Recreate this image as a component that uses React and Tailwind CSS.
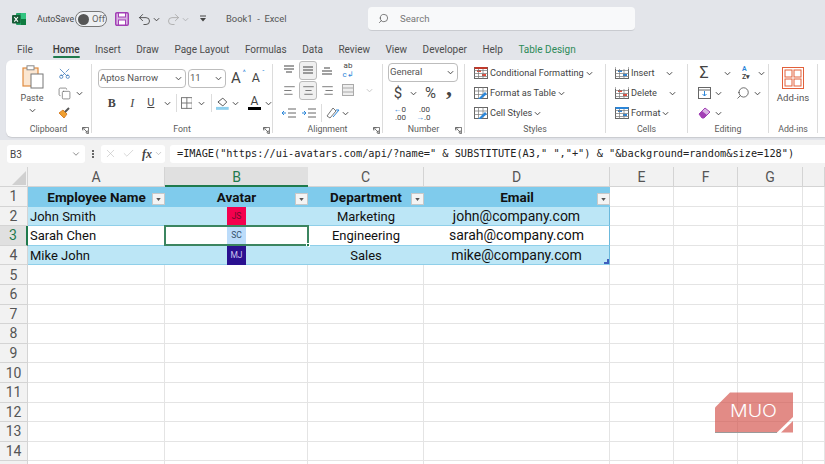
import React from "react";
import { ChevronDown, Search, Undo2, Redo2, X, Check, Scissors, Copy, AlignLeft, AlignCenter, AlignRight } from "lucide-react";

const Chev = ({ className = "" }) => (
  <svg viewBox="0 0 8 5" className={`w-[7px] h-[5px] shrink-0 ${className}`} fill="none" stroke="#444" strokeWidth="1.1"><path d="M1 1l3 3 3-3" /></svg>
);

const Launcher = () => (
  <svg viewBox="0 0 8 8" className="w-[7px] h-[7px] shrink-0" fill="none" stroke="#555" strokeWidth="0.9"><path d="M0.5 3V0.5H7.5V7.5H5" /><path d="M1 1h3M1 1v3M2 2l4 4M6 4v2H4" /></svg>
);

const Lines = ({ rows }) => (
  <svg viewBox="0 0 14 12" className="w-[14px] h-[12px]" fill="none" stroke="#555" strokeWidth="1.1">
    {rows.map((r, i) => <path key={i} d={`M${r[0]} ${r[2]}H${r[1]}`} />)}
  </svg>
);

const Sheet = ({ children }) => (
  <svg viewBox="0 0 14 14" className="w-[14px] h-[14px] shrink-0" fill="none">{children}</svg>
);

const GroupLabel = ({ children, launcher }) => (
  <div className="h-[14px] mt-auto shrink-0 relative flex items-center justify-center text-[8.8px] text-[#5c5c5c]">
    <span>{children}</span>
    {launcher && <span className="absolute right-[2px] top-[4px]"><Launcher /></span>}
  </div>
);

const Select = ({ className, children }) => (
  <div className={`h-[19px] rounded-[4px] border border-[#bdbdbd] bg-white flex items-center justify-between pl-[1px] pr-[3px] text-[#555] ${className}`}>
    {children}<Chev />
  </div>
);

const ListRow = ({ icon, label }) => (
  <div className="h-[20px] shrink-0 flex items-center">
    {icon}
    <span className="ml-[2px] text-[9.2px] text-[#444] whitespace-nowrap">{label}</span>
    <Chev className="ml-[2px]" />
  </div>
);

const Table3 = ({ c1 = "#c0392b", fill = "#e74c3c" }) => (
  <Sheet>
    <rect x="0.5" y="1.5" width="13" height="11" fill="#fff" stroke="#666" />
    <rect x="3" y="4" width="4" height="2" fill={fill} /><rect x="8" y="8" width="4" height="2" fill={fill} />
    <path d="M0 4.500h14M0 7.500h14M0 10.500h14M4.500 1v12M9 1v12" stroke="#777" strokeWidth="0.7" />
    <rect x="0.5" y="1" width="13" height="2" fill={c1} />
  </Sheet>
);

const TableBrush = () => (
  <Sheet>
    <rect x="0.5" y="1.500" width="13" height="11" fill="#fff" stroke="#666" />
    <path d="M0 5h14M0 8.500h14M4.500 1v12M9 1v12" stroke="#777" strokeWidth="0.7" />
    <path d="M5 12l6-6 2 2-6 5H4z" fill="#2b86d9" />
  </Sheet>
);

function TitleBar() {
  return (
    <div className="h-[38px] flex items-center relative shrink-0">
      <svg viewBox="0 0 14 14" className="w-[14px] h-[14px] ml-[12px]">
        <rect x="4" y="1" width="10" height="12" rx="1" fill="#21a366" />
        <rect x="9" y="1" width="5" height="6" fill="#33c481" /><rect x="9" y="7" width="5" height="6" fill="#107c41" />
        <rect x="0" y="3" width="8.500" height="8.500" rx="1" fill="#185c37" />
        <path d="M2.300 5l3.600 4.600M5.900 5L2.300 9.600" stroke="#fff" strokeWidth="1.1" />
      </svg>
      <span className="ml-[11px] pt-[1px] text-[8.8px] text-[#4a4a4a] w-[38px]">AutoSave</span>
      <div className="w-[32px] h-[16px] rounded-full border border-[#777] bg-[#eef0f3] flex items-center pl-[2px]">
        <span className="w-[11px] h-[11px] rounded-full bg-[#555]" />
        <span className="ml-[3px] text-[9.5px] text-[#666]">Off</span>
      </div>
      <svg viewBox="0 0 14 14" className="w-[14px] h-[14px] ml-[8px]" fill="none">
        <rect x="0.7" y="0.7" width="12.600" height="12.600" rx="1.200" stroke="#a23fb5" strokeWidth="1.400" fill="#d9b3e3" />
        <rect x="3.500" y="1" width="7" height="4" fill="#fff" stroke="#a23fb5" />
        <rect x="3.500" y="8" width="7" height="5" fill="#fff" stroke="#a23fb5" />
      </svg>
      <Undo2 className="w-[15px] h-[15px] ml-[8px] text-[#444]" strokeWidth={1.4} />
      <Chev className="ml-[1px]" />
      <Redo2 className="w-[15px] h-[15px] ml-[6px] text-[#a9a9a9]" strokeWidth={1.4} />
      <Chev className="ml-[1px] opacity-30" />
      <svg viewBox="0 0 8 8" className="w-[8px] h-[8px] ml-[10px]"><path d="M1 1h6" stroke="#444" /><path d="M1 3h6L4 6.500z" fill="#444" /></svg>
      <span className="ml-[19px] pt-[1px] text-[9.4px] text-[#555] whitespace-nowrap">Book1&nbsp; -&nbsp; Excel</span>
      <div className="absolute left-[368px] top-[7px] w-[267px] h-[24px] bg-[#f8f9fa] rounded-[4px] border-b border-[#c9cbd0] flex items-center pl-[10px]">
        <Search className="w-[11px] h-[11px] text-[#555] -scale-x-100" strokeWidth={1.6} />
        <span className="ml-[11px] pt-[1px] text-[9.6px] text-[#777]">Search</span>
      </div>
    </div>
  );
}

function Tabs() {
  const tabs = ["Insert", "Draw", "Page Layout", "Formulas", "Data", "Review", "View", "Developer", "Help"];
  return (
    <div className="h-[22px] flex items-center pt-[1px] pl-[17px] gap-x-[15.5px] text-[10px] text-[#4d4d4d] shrink-0 whitespace-nowrap">
      <span>File</span>
      <span className="relative ml-[4.5px] font-medium text-[#3a3a3a]">Home
        <span className="absolute left-0 right-0 top-[14px] h-[2px] bg-[#1f7a4d] rounded" />
      </span>
      {tabs.map((t) => <span key={t}>{t}</span>)}
      <span className="text-[#2d8a58]">Table Design</span>
    </div>
  );
}

function Ribbon() {
  const Divider = () => <div className="w-px self-stretch my-[4px] bg-[#dcdcdc] shrink-0" />;
  return (
    <div className="h-[77px] ml-[6px] bg-white rounded-tl-[6px] rounded-bl-[6px] flex shrink-0 shadow-[0_1px_1px_#c8cacf]">
      {/* Clipboard */}
      <div className="w-[85px] flex flex-col shrink-0">
        <div className="flex pt-[5px]">
          <div className="w-[52px] flex flex-col items-center">
            <svg viewBox="0 0 22 24" className="w-[22px] h-[24px] ml-[1px]" fill="none">
              <rect x="1" y="3" width="15" height="18" fill="#fbe6d1" stroke="#e08b3f" strokeWidth="1.200" />
              <rect x="5" y="0.8" width="7" height="4" fill="#fff" stroke="#8a8a8a" />
              <rect x="9" y="9" width="12" height="14" fill="#fff" stroke="#777" />
            </svg>
            <span className="text-[9px] text-[#555] mt-[2px] leading-[14px]">Paste</span>
            <Chev className="mt-[3px]" />
          </div>
          <div className="flex flex-col">
            <Scissors className="w-[13px] h-[13px] mt-[2px] text-[#2f6fb5] -rotate-90" strokeWidth={1.3} />
            <div className="flex items-center mt-[7px]">
              <Copy className="w-[13px] h-[13px] text-[#666]" strokeWidth={1.3} />
              <Chev className="ml-[5px]" />
            </div>
            <svg viewBox="0 0 13 13" className="w-[13px] h-[13px] mt-[6px]" fill="none">
              <path d="M1 7l5 5 3-4-4-4z" fill="#f0a030" stroke="#d9822b" /><path d="M7 6l4-4" stroke="#555" strokeWidth="2" />
            </svg>
          </div>
        </div>
        <GroupLabel launcher>Clipboard</GroupLabel>
      </div>
      <Divider />
      {/* Font */}
      <div className="w-[180px] flex flex-col shrink-0">
        <div className="flex items-center pt-[9px] pl-[6px]">
          <Select className="w-[88px] text-[9.5px]">Aptos Narrow</Select>
          <Select className="w-[38px] ml-[2px] text-[9.5px]">11</Select>
          <span className="ml-[5px] text-[15px] leading-none text-[#444] relative">A<span className="absolute -right-[5px] -top-[1px] text-[7px] text-[#2b86d9]">^</span></span>
          <span className="ml-[11px] text-[12.5px] leading-none text-[#444] relative">A<span className="absolute -right-[5px] -top-[1px] text-[7px] text-[#2b86d9]">ˇ</span></span>
        </div>
        <div className="flex items-center pt-[5px] pl-[11px] h-[25px]">
          <span className="w-[18px] text-center text-[12px] font-bold text-[#444]" style={{ fontFamily: "'Liberation Serif', serif" }}>B</span>
          <span className="w-[20px] ml-[2px] text-center text-[12px] italic text-[#444]" style={{ fontFamily: "'Liberation Serif', serif" }}>I</span>
          <span className="w-[18px] text-center text-[11px] underline text-[#444]">U</span>
          <Chev className="ml-[4px]" />
          <span className="w-px h-[18px] bg-[#dcdcdc] ml-[5px]" />
          <svg viewBox="0 0 12 12" className="w-[12px] h-[12px] ml-[4px]" fill="none" stroke="#777"><rect x="0.5" y="0.5" width="11" height="11" /><path d="M6 0v12M0 6h12" /></svg>
          <Chev className="ml-[6px]" />
          <span className="w-px h-[18px] bg-[#dcdcdc] ml-[6px]" />
          <svg viewBox="0 0 13 14" className="w-[13px] h-[14px] ml-[4px]" fill="none"><path d="M2 6l5-4 4 4-4 4z" stroke="#555" /><rect x="0" y="11" width="13" height="3" fill="#8fd0ee" /></svg>
          <Chev className="ml-[3px]" />
          <div className="ml-[9px] flex flex-col items-center w-[13px]">
            <span className="text-[12px] leading-[10px] text-[#444]">A</span>
            <span className="w-[13px] h-[3px] bg-black mt-[1px]" />
          </div>
          <Chev className="ml-[4px]" />
        </div>
        <GroupLabel launcher>Font</GroupLabel>
      </div>
      <Divider />
      {/* Alignment */}
      <div className="w-[109px] flex flex-col shrink-0">
        <div className="flex items-center pl-[7px] h-[20px] shrink-0">
          <span className="w-[18px] flex justify-center"><Lines rows={[[2, 12, 2], [2, 12, 5], [4, 10, 8]]} /></span>
          <span className="w-[18px] ml-[1px] h-[19px] flex items-center justify-center rounded-[3px] border border-[#bbb] bg-[#f0f0f0]"><Lines rows={[[2, 12, 3], [2, 12, 6], [2, 12, 9]]} /></span>
          <span className="w-[18px] ml-[1px] flex justify-center"><Lines rows={[[4, 10, 4], [2, 12, 7], [2, 12, 10]]} /></span>
          <span className="w-[16px] ml-[4px] text-[8px] leading-[9px] text-[#444] text-center">ab<br /><span className="text-[#2b86d9]">c↲</span></span>
        </div>
        <div className="flex items-center pl-[7px] h-[20px] shrink-0">
          <span className="w-[18px] flex justify-center"><AlignLeft className="w-[13px] h-[13px] text-[#555]" strokeWidth={1.4} /></span>
          <span className="w-[18px] ml-[1px] h-[19px] flex items-center justify-center rounded-[3px] border border-[#bbb] bg-[#f0f0f0]"><AlignCenter className="w-[13px] h-[13px] text-[#555]" strokeWidth={1.4} /></span>
          <span className="w-[18px] ml-[1px] flex justify-center"><AlignRight className="w-[13px] h-[13px] text-[#555]" strokeWidth={1.4} /></span>
          <svg viewBox="0 0 12 12" className="w-[12px] h-[12px] ml-[6px]" fill="#eee" stroke="#aaa"><rect x="0.5" y="0.5" width="11" height="11" /><path d="M0 4h12M0 8h12" /></svg>
          <Chev className="ml-[12px] opacity-30" />
        </div>
        <div className="flex items-center pl-[9px] h-[20px] mt-[3px] shrink-0">
          <svg viewBox="0 0 14 12" className="w-[14px] h-[12px]" fill="none" stroke="#666"><path d="M6 2h8M6 6h8M6 10h8" /><path d="M4 6H0M2 4L0 6l2 2" stroke="#2b86d9" /></svg>
          <svg viewBox="0 0 14 12" className="w-[14px] h-[12px] ml-[6px]" fill="none" stroke="#666"><path d="M6 2h8M6 6h8M6 10h8" /><path d="M0 6h4M2 4l2 2-2 2" stroke="#2b86d9" /></svg>
          <span className="w-px h-[18px] bg-[#dcdcdc] ml-[5px]" />
          <svg viewBox="0 0 14 14" className="w-[14px] h-[14px] ml-[4px]" fill="none"><path d="M1 10L7 2l3 3-6 7z" stroke="#777" /><path d="M7 11l6-7M13 4h-3" stroke="#2b86d9" /></svg>
          <Chev className="ml-[2px]" />
        </div>
        <GroupLabel launcher>Alignment</GroupLabel>
      </div>
      <Divider />
      {/* Number */}
      <div className="w-[81px] flex flex-col shrink-0">
        <div className="pt-[3px] pl-[5px]"><Select className="w-[70px] text-[9.5px]">General</Select></div>
        <div className="h-[22px] shrink-0 flex items-center pl-[10px]">
          <span className="w-[10px] text-[15px] text-[#444] leading-none text-center">$</span>
          <Chev className="ml-[7px]" />
          <span className="ml-[8px] text-[15px] text-[#444] leading-none">%</span>
          <span className="ml-[10px] h-[12px] text-[24px] font-bold text-[#444] leading-[0px]" style={{ fontFamily: "'Liberation Serif', serif" }}>,</span>
        </div>
        <div className="h-[19px] shrink-0 flex items-center pl-[10px]">
          <div className="w-[13px] text-[8px] leading-[8px] text-[#444] text-right"><span className="text-[#2b86d9]">←</span>0<br />.00</div>
          <div className="w-[14px] ml-[10px] text-[8px] leading-[8px] text-[#444] text-right">.00<br /><span className="text-[#2b86d9]">→</span>.0</div>
        </div>
        <GroupLabel launcher>Number</GroupLabel>
      </div>
      <Divider />
      {/* Styles */}
      <div className="w-[140px] flex flex-col shrink-0 pt-[3px] pl-[9px]">
        <ListRow icon={<Table3 />} label="Conditional Formatting" />
        <ListRow icon={<TableBrush />} label="Format as Table" />
        <ListRow icon={<TableBrush />} label="Cell Styles" />
        <div className="-ml-[9px]"><GroupLabel>Styles</GroupLabel></div>
      </div>
      <Divider />
      {/* Cells */}
      <div className="w-[81px] flex flex-col shrink-0 pt-[3px] pl-[9px]">
        <div className="h-[20px] shrink-0 flex items-center"><Table3 c1="#fff" fill="#2b86d9" /><span className="ml-[2px] w-[35px] text-[9.2px] text-[#444]">Insert</span><Chev /></div>
        <div className="h-[20px] shrink-0 flex items-center"><Table3 c1="#fff" fill="#e74c3c" /><span className="ml-[2px] w-[38px] text-[9.2px] text-[#444]">Delete</span><Chev /></div>
        <div className="h-[20px] shrink-0 flex items-center"><Table3 c1="#2b86d9" fill="#2b86d9" /><span className="ml-[2px] text-[9.2px] text-[#444]">Format</span><Chev className="ml-[2px]" /></div>
        <div className="-ml-[9px]"><GroupLabel>Cells</GroupLabel></div>
      </div>
      <Divider />
      {/* Editing */}
      <div className="w-[80px] flex flex-col shrink-0 pt-[3px] pl-[10px]">
        <div className="h-[20px] shrink-0 flex items-center">
          <span className="w-[12px] text-[16px] leading-none text-[#444] text-center">Σ</span><Chev className="ml-[14px]" />
          <span className="ml-[11px] w-[13px] text-[7px] leading-[8px] text-[#2b86d9] font-semibold">A<br /><span className="text-[#444]">Z▾</span></span><Chev className="ml-[3px]" />
        </div>
        <div className="h-[20px] shrink-0 flex items-center">
          <svg viewBox="0 0 13 12" className="w-[13px] h-[12px]" fill="none"><rect x="0.5" y="0.5" width="12" height="11" stroke="#666" /><path d="M0 3h13" stroke="#666" /><path d="M6.500 4v5M4.500 7l2 2 2-2" stroke="#2b86d9" /></svg>
          <Chev className="ml-[4px]" />
          <Search className="w-[14px] h-[14px] ml-[14px] text-[#444] -scale-x-100" strokeWidth={1.3} />
          <Chev className="ml-[4px]" />
        </div>
        <div className="h-[20px] shrink-0 flex items-center">
          <svg viewBox="0 0 13 12" className="w-[13px] h-[12px]" fill="none"><path d="M1 7l6-6 5 4-6 6H4z" fill="#d9b3e3" stroke="#a23fb5" /><path d="M1 7l3-3 5 4-3 3H4z" fill="#a23fb5" /></svg>
          <Chev className="ml-[4px]" />
        </div>
        <div className="-ml-[10px]"><GroupLabel>Editing</GroupLabel></div>
      </div>
      <Divider />
      {/* Add-ins */}
      <div className="w-[48px] flex flex-col items-stretch shrink-0">
        <svg viewBox="0 0 22 22" className="w-[22px] h-[22px] mt-[7px] ml-[13px]" fill="none" stroke="#e2603a"><rect x="0.5" y="0.5" width="21" height="21" strokeWidth="1" /><rect x="3" y="3" width="7" height="7" /><rect x="12" y="3" width="7" height="7" /><rect x="3" y="12" width="7" height="7" /><rect x="12" y="12" width="7" height="7" /></svg>
        <span className="text-[9.6px] text-[#555] text-center mt-[2px] leading-[14px]">Add-ins</span>
        <GroupLabel>Add-ins</GroupLabel>
      </div>
      <Divider />
    </div>
  );
}

function FormulaBar() {
  const formula = `=IMAGE("https://ui-avatars.com/api/?name=" & SUBSTITUTE(A3," ","+") & "&background=random&size=128")`;
  return (
    <div className="h-[27px] mt-[3px] bg-[#f2f2f2] flex items-center pl-[7px] shrink-0">
      <div className="w-[78px] h-[18px] bg-white rounded-[3px] flex items-center justify-between pl-[3px] pr-[4px] pt-[1px] text-[10px] text-[#444]">B3<ChevronDown className="w-[10px] h-[10px] text-[#555]" strokeWidth={1.6} /></div>
      <div className="w-[16px] flex flex-col items-center gap-[1px]">
        <span className="w-[2px] h-[2px] bg-[#666]" /><span className="w-[2px] h-[2px] bg-[#666]" /><span className="w-[2px] h-[2px] bg-[#666]" />
      </div>
      <div className="w-[64px] h-[18px] bg-white rounded-[3px] flex items-center pl-[3px]">
        <X className="w-[13px] h-[13px] text-[#bdbdbd]" strokeWidth={1.1} />
        <Check className="w-[13px] h-[13px] ml-[5px] text-[#bdbdbd]" strokeWidth={1.1} />
        <span className="ml-[7px] text-[12px] italic font-bold text-[#444] leading-none" style={{ fontFamily: "'Liberation Serif', serif" }}>fx</span>
        <ChevronDown className="w-[9px] h-[9px] ml-[2px] text-[#999]" strokeWidth={1.4} />
      </div>
      <div className="ml-[5px] flex-1 h-[18px] bg-white rounded-l-[3px] flex items-center pl-[7px] pt-[1px] text-[10.25px] text-[#222] whitespace-pre overflow-hidden" style={{ fontFamily: "'DejaVu Sans Mono', monospace" }}>{formula}</div>
    </div>
  );
}

const FilterBtn = () => (
  <span className="absolute right-0 top-[6px] w-[13px] h-[12px] bg-[#f4f4f4] border border-[#c8c8c8] flex items-center justify-center">
    <svg viewBox="0 0 6 4" className="w-[5px] h-[3px]"><path d="M0 0h6L3 4z" fill="#555" /></svg>
  </span>
);

const Avatar = ({ bg, fg, children }) => (
  <span className={`w-[19px] h-[19px] flex items-center justify-center text-[8.5px] ${bg} ${fg}`}>{children}</span>
);

function Grid() {
  const rows = [
    ["John Smith", <Avatar bg="bg-[#f4004e]" fg="text-[#6e0c2a]">JS</Avatar>, "Marketing", "john@company.com"],
    ["Sarah Chen", <Avatar bg="bg-[#bcdcfa]" fg="text-[#34506a]">SC</Avatar>, "Engineering", "sarah@company.com"],
    ["Mike John", <Avatar bg="bg-[#2a1190]" fg="text-[#c8c0ee]">MJ</Avatar>, "Sales", "mike@company.com"],
  ];
  const colH = "bg-[#f2f2f2] border-r border-b border-[#d4d4d4] flex items-center justify-center pt-[2px] text-[14px] text-[#555]";
  const rowH = "bg-[#f2f2f2] border-r border-b border-[#d4d4d4] flex items-center justify-center pt-[1px] text-[14px] text-[#555]";
  const cell = "border-r border-b border-[#e4e4e4]";
  const line = "border-b border-[#8fcfe9]";
  return (
    <div className="flex-1 bg-white overflow-hidden relative" style={{ fontFamily: "Roboto, sans-serif" }}>
      <div className="grid grid-cols-[28px_137px_143px_116px_186px_64px_64px_65px_22px] grid-rows-[20px] auto-rows-[19.6px]">
        <div className={`${colH} relative`}>
          <svg viewBox="0 0 14 14" className="absolute right-[1px] bottom-[1px] w-[14px] h-[14px]"><path d="M14 0v14H0z" fill="#d0d0d0" /></svg>
        </div>
        {["A", "B", "C", "D", "E", "F", "G", ""].map((c) => (
          <div key={c} className={c === "B" ? "bg-[#e0e0e0] border-b-2 border-[#1f7a4d] flex items-center justify-center pt-[2px] text-[14px] text-[#1f7a4d]" : colH}>{c}</div>
        ))}

        <div className={rowH}>1</div>
        {["Employee Name", "Avatar", "Department", "Email"].map((h) => (
          <div key={h} className="relative bg-[#7fcbec] flex items-center justify-center pt-[1px] text-[13.5px] font-bold text-[#111] whitespace-nowrap">
            {h}<FilterBtn />
          </div>
        ))}
        {Array.from({ length: 4 }).map((_, i) => <div key={i} className={cell} />)}

        {rows.map((r, ri) => {
          const band = ri === 1 ? "bg-white" : "bg-[#bce6f6]";
          return (
            <React.Fragment key={ri}>
              <div className={ri === 1 ? "bg-[#e0e0e0] border-r-2 border-b border-r-[#1f7a4d] border-b-[#d4d4d4] flex items-center justify-center pt-[1px] text-[14px] text-[#1f7a4d]" : rowH}>{ri + 2}</div>
              <div className={`${band} ${line} flex items-center pl-[2px] pt-[1px] text-[13px] text-[#111] whitespace-nowrap`}>{r[0]}</div>
              <div className={`${band} ${line} flex justify-center items-start relative`}>
                {r[1]}
                {ri === 1 && <span className="absolute -inset-[1px] border-2 border-[#3b8560]" />}
                {ri === 1 && <span className="absolute -right-[2px] -bottom-[2px] w-[4px] h-[4px] bg-[#1f7a4d] border border-white" />}
              </div>
              <div className={`${band} ${line} flex items-center justify-center pt-[1px] text-[13px] text-[#111]`}>{r[2]}</div>
              <div className={`${band} ${line} flex items-center justify-center pt-[1px] text-[14px] text-[#111] relative border-r border-r-[#6bb9dc]`}>
                {r[3]}
                {ri === 2 && <svg viewBox="0 0 5 5" className="absolute right-0 bottom-0 w-[5px] h-[5px]"><path d="M5 0v5H0V3h3V0z" fill="#3f5ebd" /></svg>}
              </div>
              {Array.from({ length: 4 }).map((_, i) => <div key={i} className={cell} />)}
            </React.Fragment>
          );
        })}

        {Array.from({ length: 11 }).map((_, i) => (
          <React.Fragment key={i}>
            <div className={rowH}>{i < 10 ? i + 5 : ""}</div>
            {Array.from({ length: 8 }).map((_, j) => <div key={j} className={cell} />)}
          </React.Fragment>
        ))}
      </div>

      <svg viewBox="0 0 80 42" className="absolute left-[715px] top-[225px] w-[80px] h-[42px]">
        <path d="M0 15.500L15 0.500H78V25L62 40.500H0z" fill="#d4544c" fillOpacity="0.68" />
        <path d="M66 40.500L78 29V40.500z" fill="#d4544c" fillOpacity="0.68" />
        <path d="M0 40.500H62" stroke="#9a9a9a" strokeWidth="1" />
        <text x="15" y="25" fontSize="17" fontWeight="300" fill="#fff" textLength="47" lengthAdjust="spacingAndGlyphs" fontFamily="Inter, sans-serif">MUO</text>
      </svg>
    </div>
  );
}

export default function App() {
  return (
    <div className="w-[825px] h-[464px] overflow-hidden bg-[#e3e5ea] flex flex-col" style={{ fontFamily: "Roboto, sans-serif" }}>
      <TitleBar />
      <Tabs />
      <Ribbon />
      <FormulaBar />
      <Grid />
    </div>
  );
}
